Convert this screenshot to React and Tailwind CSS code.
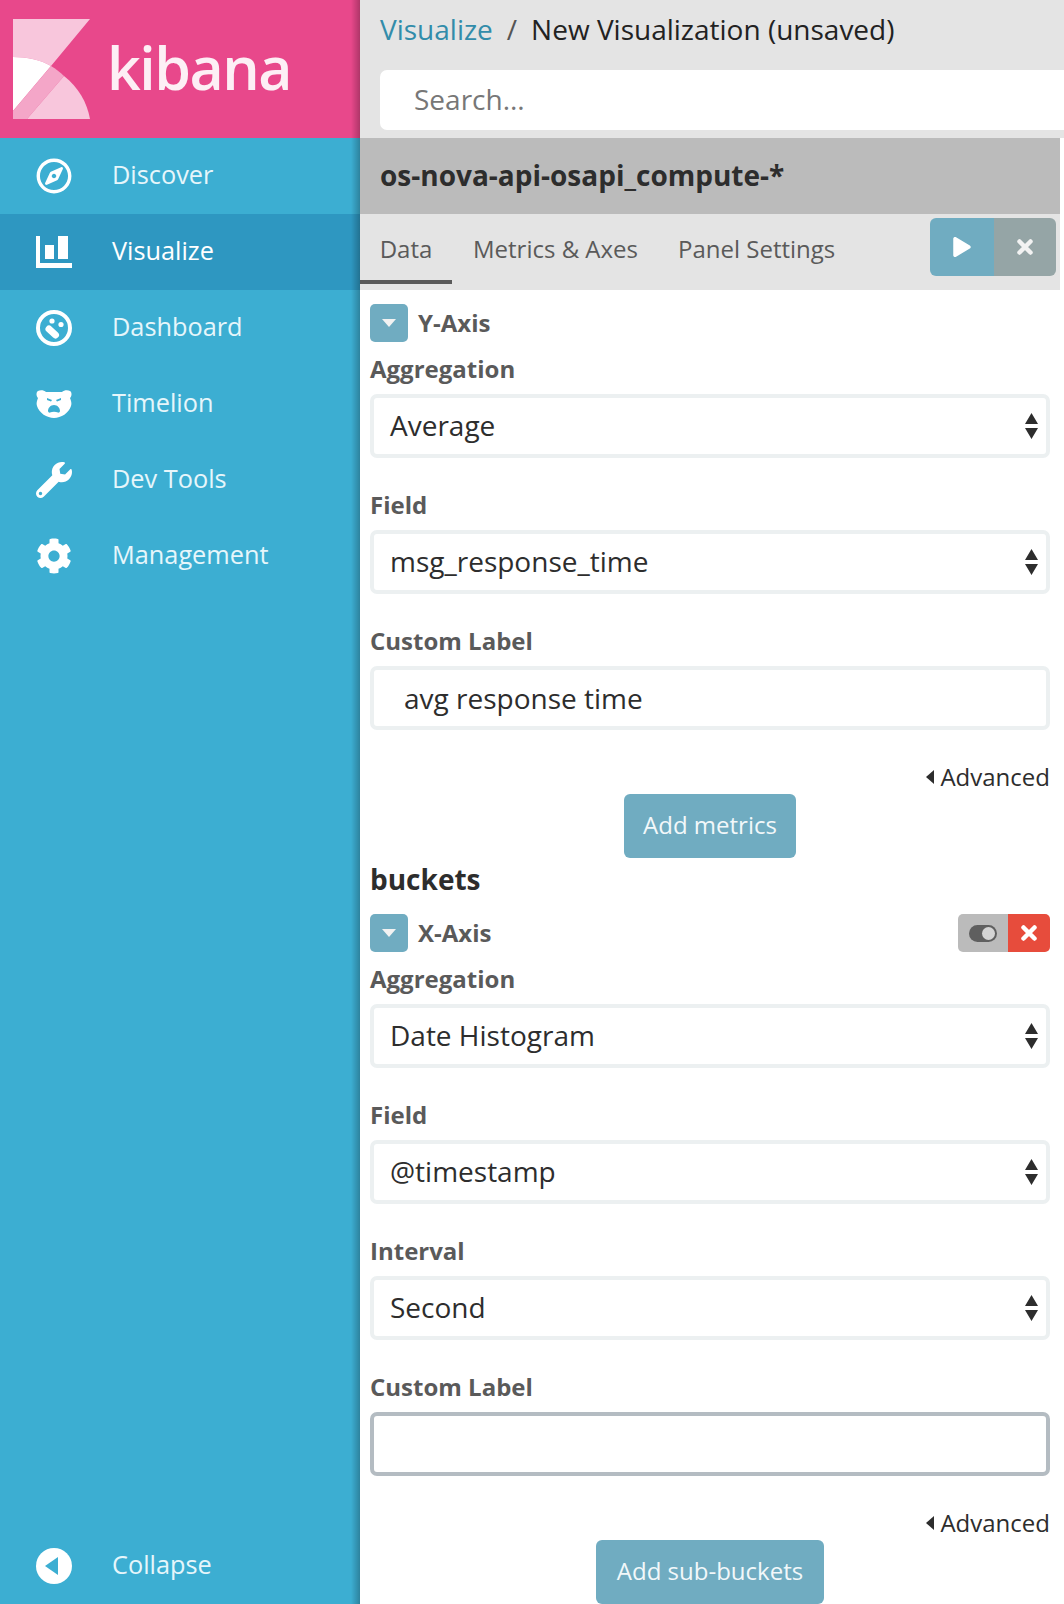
import React from "react";
import { FaRegCompass, FaWrench, FaCog, FaPlay } from "react-icons/fa";

const BarsIcon = () => (
  <svg viewBox="0 0 36 32" className="w-[36px] h-[32px]" fill="#fff">
    <path d="M0 0h4v27h32v5H0z" />
    <path d="M9 9h9v14H9zM22 0h10v23H22z" />
  </svg>
);

const DashIcon = () => (
  <svg viewBox="0 0 36 36" className="w-[36px] h-[36px]" fill="#fff">
    <circle cx="18" cy="18" r="16" fill="none" stroke="#fff" strokeWidth="4" />
    <path d="M13 19l6.500 6" stroke="#fff" strokeWidth="7" strokeLinecap="round" />
    <circle cx="16" cy="11" r="2.600" />
    <circle cx="25" cy="14.500" r="2.600" />
  </svg>
);

const BearIcon = () => (
  <svg viewBox="0 0 36 28" className="w-[36px] h-[28px]" fill="#fff" fillRule="evenodd">
    <path d="M2 1C4 0 8 0 10 2h16c2-2 6-2 8-1 2 1 2 5 0 7 1 3 2 5 1 8-2 7-10 12-17 12S3 23 1 16c-1-3 0-5 1-8C0 6 0 2 2 1zM11 8l5 2-1 1.500-4-1.500zM25 8l-5 2 1 1.500 4-1.500zM18 15c-3.500 0-6 3-6 6 0 1 1 2 2 1.500 2.500-1 5.500-1 8 0 1 .5 2-.5 2-1.500 0-3-2.500-6-6-6z" />
  </svg>
);

const CollapseIcon = () => (
  <svg viewBox="0 0 36 36" className="w-[36px] h-[36px]">
    <circle cx="18" cy="18" r="18" fill="#fff" />
    <path d="M9 18l13-9v18z" fill="#3caed2" />
  </svg>
);

const XIcon = ({ size = 16 }) => (
  <svg viewBox="0 0 16 16" style={{ width: size, height: size }}>
    <path d="M2.500 2.500l11 11M13.500 2.500l-11 11" stroke="currentColor" strokeWidth="4.500" strokeLinecap="round" />
  </svg>
);

const KibanaMark = () => (
  <svg viewBox="0 0 77 100" className="w-[77px] h-[100px]">
    <path d="M0 0h77L38 47C28 41 14 38 0 38z" fill="#f8c6dc" />
    <path d="M0 38c14 0 28 3 38 9L0 92z" fill="#fff" />
    <path d="M0 92l38-45c5 3 9 6 13 10L14 100H0z" fill="#f4a6c8" />
    <path d="M14 100l37-43c14 11 23 26 26 43z" fill="#f8c6dc" />
  </svg>
);

const NavItem = ({ icon, label, active }) => (
  <div className={`h-[76px] flex items-center pl-[36px] ${active ? "bg-[#2e97c1] text-white" : "text-[#e6f6fb]"}`}>
    <div className="w-[36px] flex justify-center text-white">{icon}</div>
    <span className="ml-[40px] pb-[2px] text-[25.3px]">{label}</span>
  </div>
);

const Caret = () => (
  <svg viewBox="0 0 14 8" className="w-[14px] h-[8px]">
    <path d="M0 0h14L7 8z" fill="#f2f2f2" />
  </svg>
);

const SectionHeader = ({ title, controls }) => (
  <div className="flex items-center h-[38px]">
    <div className="w-[38px] h-[38px] rounded-[5px] bg-[#70acc1] flex items-center justify-center">
      <Caret />
    </div>
    <span className="ml-[10px] text-[24px] font-bold text-[#5a5a5a]">{title}</span>
    {controls}
  </div>
);

const Field = ({ label, children }) => (
  <div className="mt-[22px] first:mt-[2px]">
    <div className="h-[50px] flex items-center text-[24px] font-bold text-[#5a5a5a]">{label}</div>
    {children}
  </div>
);

const SelectBox = ({ value }) => (
  <div className="h-[64px] border-[4px] border-[#ecf0f1] rounded-[7px] bg-white flex items-center justify-between pl-[16px] pr-[8px] text-[28px] text-[#2d2d2d]">
    <span className="pb-[2px]">{value}</span>
    <svg viewBox="0 0 13 26" className="w-[13px] h-[26px]">
      <path d="M6.500 0L13 11H0zM0 15h13L6.500 26z" fill="#2d2d2d" />
    </svg>
  </div>
);

const TextBox = ({ value = "", focused }) => (
  <input
    readOnly
    value={value}
    className={`block w-full h-[64px] border-[4px] rounded-[7px] bg-white pl-[30px] text-[28px] text-[#2d2d2d] outline-none ${focused ? "border-[#b4bcc2]" : "border-[#ecf0f1]"}`}
  />
);

const Advanced = () => (
  <div className="mt-[32px] h-[30px] flex items-center justify-end text-[24px] text-[#2d2d2d]">
    <svg viewBox="0 0 8 14" className="w-[8px] h-[14px] mr-[6px]">
      <path d="M8 0v14L0 7z" fill="#2d2d2d" />
    </svg>
    Advanced
  </div>
);

const AddButton = ({ children, wide }) => (
  <div className="mt-[2px] flex justify-center">
    <div className={`h-[64px] pb-[2px] rounded-[6px] bg-[#70acc1] text-[#f2f8fa] text-[24px] flex items-center ${wide ? "px-[21px]" : "px-[19px]"}`}>{children}</div>
  </div>
);

const App = () => {
  return (
    <div className="flex w-[1064px] h-[1604px] overflow-hidden bg-white" style={{ fontFamily: '"Open Sans", sans-serif' }}>
      <aside className="relative w-[360px] shrink-0 flex flex-col bg-[#3caed2]">
        <div className="h-[138px] bg-[#e8488b] flex items-center pl-[13px]">
          <KibanaMark />
          <span className="ml-[17px] pb-[4px] text-[59px] leading-none font-semibold tracking-[-1.500px] text-[#fdeff5]">kibana</span>
        </div>
        <NavItem icon={<FaRegCompass size={36} />} label="Discover" />
        <NavItem icon={<BarsIcon />} label="Visualize" active />
        <NavItem icon={<DashIcon />} label="Dashboard" />
        <NavItem icon={<BearIcon />} label="Timelion" />
        <NavItem icon={<FaWrench size={36} />} label="Dev Tools" />
        <NavItem icon={<FaCog size={36} />} label="Management" />
        <div className="flex-1" />
        <NavItem icon={<CollapseIcon />} label="Collapse" />
        {/* shadow strip on the sidebar edge */}
        <div className="absolute top-0 right-0 bottom-0 w-[9px] bg-gradient-to-r from-black/0 to-black/25" />
      </aside>

      <main className="flex-1 min-w-0">
        <div className="h-[138px] bg-[#e4e4e4] pl-[20px] pt-[7px]">
          <div className="h-[44px] flex items-center text-[28px] text-[#222]">
            <span className="text-[#328caa]">Visualize</span>
            <span className="mx-[14px] text-[#555]">/</span>
            <span>New Visualization (unsaved)</span>
          </div>
          <div className="mt-[19px] h-[60px] pb-[2px] bg-white rounded-l-[7px] pl-[34px] flex items-center text-[28px] text-[#777]">Search...</div>
        </div>

        <div className="w-[700px] h-[76px] pb-[2px] bg-[#bbbbbb] pl-[20px] flex items-center text-[28px] font-bold text-[#2d2d2d]">
          os-nova-api-osapi_compute-*
        </div>

        <div className="w-[700px] h-[76px] bg-[#e4e4e4] flex">
          <div className="w-[92px] h-[70px] pt-[4px] border-b-[4px] border-[#5a5a5a] flex items-center justify-center text-[24px] text-[#5a5a5a]">Data</div>
          <div className="ml-[21px] h-[70px] flex items-center text-[24px] text-[#5a5a5a]">Metrics &amp; Axes</div>
          <div className="ml-[40px] h-[70px] flex items-center text-[24px] text-[#5a5a5a]">Panel Settings</div>
          <div className="ml-auto mr-[4px] mt-[4px] h-[58px] flex rounded-[6px] overflow-hidden">
            <div className="w-[64px] bg-[#70acc1] flex items-center justify-center text-white"><FaPlay size={20} /></div>
            <div className="w-[62px] bg-[#95a5a6] flex items-center justify-center text-[#f2f2f2]"><XIcon /></div>
          </div>
        </div>

        <div className="w-[700px] px-[10px] pt-[14px]">
          <SectionHeader title="Y-Axis" />
          <div>
            <Field label="Aggregation"><SelectBox value="Average" /></Field>
            <Field label="Field"><SelectBox value="msg_response_time" /></Field>
            <Field label="Custom Label"><TextBox value="avg response time" /></Field>
          </div>
          <Advanced />
          <AddButton>Add metrics</AddButton>

          <div className="h-[44px] pb-[2px] mb-[12px] flex items-center text-[28px] font-bold text-[#2d2d2d]">buckets</div>

          <SectionHeader
            title="X-Axis"
            controls={
              <div className="ml-auto h-[38px] flex rounded-[5px] overflow-hidden">
                <div className="w-[50px] bg-[#bbbbbb] flex items-center justify-center">
                  <svg viewBox="0 0 28 17" className="w-[28px] h-[17px]">
                    <rect width="28" height="17" rx="8.500" fill="#5f5f5f" />
                    <circle cx="19.500" cy="8.500" r="6.500" fill="#d4d4d4" />
                  </svg>
                </div>
                <div className="w-[42px] bg-[#e74c3c] flex items-center justify-center text-white"><XIcon /></div>
              </div>
            }
          />
          <div>
            <Field label="Aggregation"><SelectBox value="Date Histogram" /></Field>
            <Field label="Field"><SelectBox value="@timestamp" /></Field>
            <Field label="Interval"><SelectBox value="Second" /></Field>
            <Field label="Custom Label"><TextBox focused /></Field>
          </div>
          <Advanced />
          <AddButton wide>Add sub-buckets</AddButton>
        </div>
      </main>
    </div>
  );
};

export default App;
